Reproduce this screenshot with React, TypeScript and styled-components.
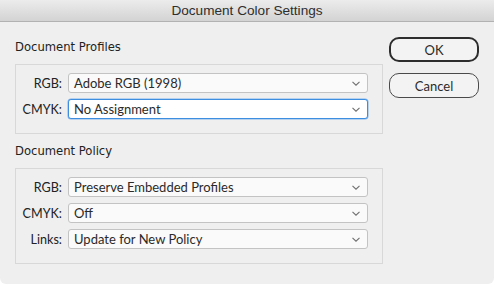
import React from "react";
import styled, { createGlobalStyle } from "styled-components";

const Global = createGlobalStyle`
  html, body { margin: 0; padding: 0; background: #ffffff; }
  * { box-sizing: border-box; }
`;

const Window = styled.div`
  width: 494px;
  height: 284px;
  background: #efefef;
  border-radius: 0 0 6px 6px;
  overflow: hidden;
  font-family: "Lato", "Liberation Sans", Arial, sans-serif;
  color: #2b2b2b;
  display: flex;
  flex-direction: column;
`;

const TitleBar = styled.div`
  height: 22px;
  flex: none;
  background: linear-gradient(#ececec, #d3d3d3);
  border-bottom: 1px solid #b2b2b2;
  display: flex;
  align-items: center;
  justify-content: center;
  font-family: "Liberation Sans", Arial, sans-serif;
  font-size: 13.6px;
  color: #2e2e2e;
`;

const Body = styled.div`
  display: flex;
  gap: 6px;
  padding: 15px 15px 0 15px;
`;

const Left = styled.div`
  width: 368px;
  display: flex;
  flex-direction: column;
`;

const Heading = styled.div<{ $top: number }>`
  font-family: "DejaVu Sans", Verdana, sans-serif;
  font-size: 11.6px;
  line-height: 18px;
  margin-top: ${(p) => p.$top}px;
  margin-bottom: 8px;
  color: #222;
`;

const Panel = styled.div`
  border: 1px solid #d8d8d8;
  padding: 8px 14px 14px 0;
  display: flex;
  flex-direction: column;
  gap: 6px;
`;

const Row = styled.div`
  display: flex;
  align-items: center;
  gap: 6px;
`;

const Label = styled.div`
  width: 46px;
  text-align: right;
  font-size: 12.6px;
  color: #222;
`;

const Select = styled.div<{ $focused?: boolean }>`
  width: 300px;
  height: 20px;
  border: 1px solid ${(p) => (p.$focused ? "#3d8ee0" : "#c3c3c3")};
  border-radius: 3px;
  background: ${(p) => (p.$focused ? "#ffffff" : "#fafafa")};
  box-shadow: ${(p) => (p.$focused ? "0 0 0 0.5px #7fb3ec" : "none")};
  display: flex;
  align-items: center;
  justify-content: space-between;
  padding: 0 7px 0 5px;
  font-size: 13px;
  color: #2b2b2b;
`;

const Chevron = () => (
  <svg width="8" height="5" viewBox="0 0 8 5">
    <path d="M0.5 0.8 L4 4.2 L7.5 0.8" fill="none" stroke="#6f6f6f" strokeWidth="1.1" />
  </svg>
);

const Right = styled.div`
  width: 90px;
  display: flex;
  flex-direction: column;
  gap: 11px;
`;

const Button = styled.div<{ $primary?: boolean }>`
  height: 25px;
  border: ${(p) => (p.$primary ? "2px solid #2d2d2d" : "1px solid #4a4a4a")};
  border-radius: 10px;
  background: #f3f3f3;
  display: flex;
  align-items: center;
  justify-content: center;
  font-size: 13px;
  color: #2b2b2b;
`;

const Field = ({ label, value, focused }: { label: string; value: string; focused?: boolean }) => (
  <Row>
    <Label>{label}</Label>
    <Select $focused={focused}>
      <span>{value}</span>
      <Chevron />
    </Select>
  </Row>
);

export default function App() {
  return (
    <>
      <Global />
      <Window>
        <TitleBar>Document Color Settings</TitleBar>
        <Body>
          <Left>
            <Heading $top={1}>Document Profiles</Heading>
            <Panel>
              <Field label="RGB:" value="Adobe RGB (1998)" />
              <Field label="CMYK:" value="No Assignment" focused />
            </Panel>
            <Heading $top={8}>Document Policy</Heading>
            <Panel>
              <Field label="RGB:" value="Preserve Embedded Profiles" />
              <Field label="CMYK:" value="Off" />
              <Field label="Links:" value="Update for New Policy" />
            </Panel>
          </Left>
          <Right>
            <Button $primary>OK</Button>
            <Button>Cancel</Button>
          </Right>
        </Body>
      </Window>
    </>
  );
}
